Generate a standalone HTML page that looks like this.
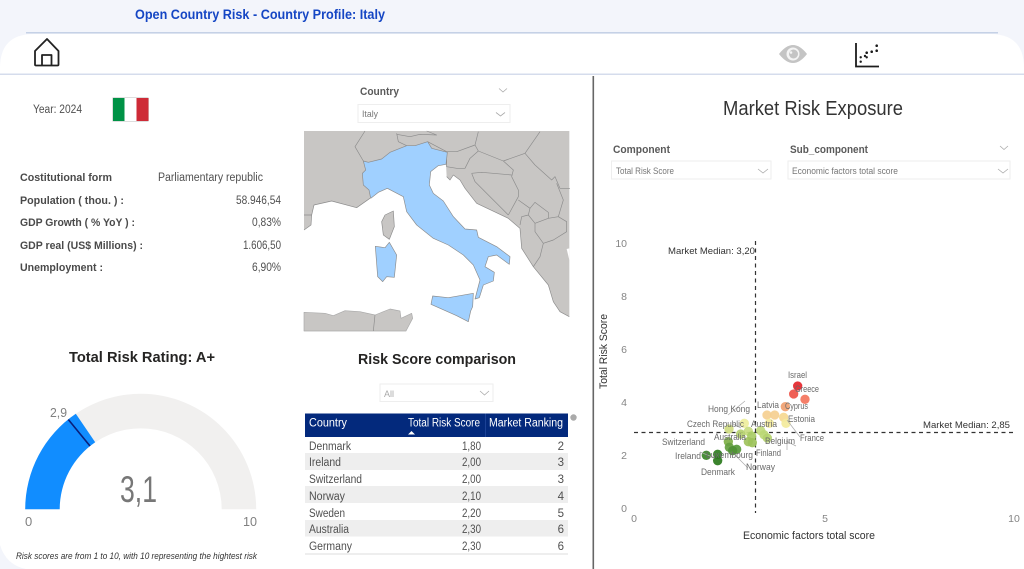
<!DOCTYPE html>
<html><head><meta charset="utf-8"><title>Open Country Risk</title>
<style>
html,body{margin:0;padding:0;background:#f3f5fb;width:1024px;height:569px;overflow:hidden}
svg{display:block;filter:blur(.3px)}
text{font-family:"Liberation Sans",sans-serif;fill:#444;font-size:11.5px}
.b{font-weight:bold;font-size:11px;fill:#4a4a4a}
.s{font-size:9.5px;fill:#6a6a6a}
.c{fill:none;stroke:#aaa;stroke-width:.8}
.box{fill:#fff;stroke:#eee;stroke-width:1}
.dd{font-size:9px;fill:#777}
.lab{font-size:11px;fill:#5a5a5a;font-weight:bold}
.t{fill:#505050}
.ax{font-size:10.5px;fill:#858585}
</style></head><body>
<svg width="1024" height="569" viewBox="0 0 1024 569" xmlns="http://www.w3.org/2000/svg">
<rect width="1024" height="569" fill="#f3f5fb"/>
<path d="M0 569V68Q0 34 34 34H990Q1024 34 1024 68V569Z" fill="#fff"/>
<path d="M0 545Q6 565 26 569H0Z" fill="#f3f5fb"/>
<rect x="26" y="32" width="972" height="1.5" fill="#c5d1e6"/>
<rect x="0" y="73.5" width="1024" height="1.5" fill="#d5dcec"/>
<rect x="592.5" y="76" width="1.6" height="493" fill="#666"/>
<text x="135" y="19" style="font-weight:bold;font-size:13.5px;fill:#1546c4" textLength="250" lengthAdjust="spacingAndGlyphs">Open Country Risk - Country Profile: Italy</text>

<!-- home icon -->
<g fill="none" stroke="#222" stroke-width="1.8" stroke-linejoin="round">
<path d="M35 51L47 39L58.500 51V64.500Q58.500 65.500 57.500 65.500H36Q35 65.500 35 64.500Z"/>
<path d="M42 65.500V55H51.500V65.500"/>
</g>
<!-- eye icon -->
<path d="M779 54Q793 36 807 54Q793 72 779 54Z" fill="#c4c4c4"/>
<circle cx="793" cy="54" r="6.500" fill="#f4f4f4"/><circle cx="793.500" cy="54" r="4.500" fill="#c4c4c4"/><circle cx="791" cy="52.500" r="1.300" fill="#f4f4f4"/>
<!-- scatter icon -->
<path d="M856 43V66.500H879" fill="none" stroke="#1c1c1c" stroke-width="1.800"/>
<g fill="#1c1c1c"><circle cx="876.700" cy="45.700" r="1.300"/><circle cx="876.700" cy="50.700" r="1.300"/><circle cx="871.700" cy="51.700" r="1.300"/><circle cx="866.700" cy="52.700" r="1.300"/><circle cx="865" cy="56" r="1.200"/><circle cx="860.700" cy="57.300" r="1.200"/><circle cx="866.700" cy="57.300" r="1.200"/><circle cx="860.700" cy="61.700" r="1.200"/></g>

<!-- left info -->
<text x="33" y="113" class="t" textLength="49" lengthAdjust="spacingAndGlyphs">Year: 2024</text>
<rect x="112" y="97" width="37" height="25" rx="2" fill="#ddd"/>
<rect x="113" y="98" width="11.500" height="23" fill="#009246"/><rect x="124.500" y="98" width="12" height="23" fill="#fff"/><rect x="136.500" y="98" width="12" height="23" fill="#ce2b37"/>
<text x="20" y="181" class="b" textLength="92" lengthAdjust="spacingAndGlyphs">Costitutional form</text>
<text x="158" y="181" class="t" textLength="105" lengthAdjust="spacingAndGlyphs">Parliamentary republic</text>
<text x="20" y="204" class="b" textLength="104" lengthAdjust="spacingAndGlyphs">Population ( thou. ) :</text>
<text x="281" y="204" text-anchor="end" class="t" textLength="45" lengthAdjust="spacingAndGlyphs">58.946,54</text>
<text x="20" y="226" class="b" textLength="115" lengthAdjust="spacingAndGlyphs">GDP Growth ( % YoY ) :</text>
<text x="281" y="226" text-anchor="end" class="t" textLength="29" lengthAdjust="spacingAndGlyphs">0,83%</text>
<text x="20" y="249" class="b" textLength="123" lengthAdjust="spacingAndGlyphs">GDP real (US$ Millions) :</text>
<text x="281" y="249" text-anchor="end" class="t" textLength="38" lengthAdjust="spacingAndGlyphs">1.606,50</text>
<text x="20" y="271" class="b" textLength="83" lengthAdjust="spacingAndGlyphs">Unemployment :</text>
<text x="281" y="271" text-anchor="end" class="t" textLength="29" lengthAdjust="spacingAndGlyphs">6,90%</text>

<!-- gauge -->
<text x="69" y="362" style="font-weight:bold;font-size:15px;fill:#252423" textLength="146" lengthAdjust="spacingAndGlyphs">Total Risk Rating: A+</text>
<path d="M25.200 509.300A115.500 115.500 0 0 1 256.200 509.300H221.700A81 81 0 0 0 59.700 509.300Z" fill="#f1f0ef"/>
<path d="M25.200 509.300A115.500 115.500 0 0 1 75.800 413.800L95.200 442.300A81 81 0 0 0 59.700 509.300Z" fill="#118dff"/>
<path d="M68.300 419.500L90 446" stroke="#0a1f7a" stroke-width="1.600"/>
<text x="50" y="417" style="font-size:13px;fill:#808080" textLength="17" lengthAdjust="spacingAndGlyphs">2,9</text>
<text x="120" y="502" style="font-size:37px;fill:#777" textLength="37" lengthAdjust="spacingAndGlyphs">3,1</text>
<text x="25" y="526" style="font-size:13px;fill:#808080">0</text>
<text x="243" y="526" style="font-size:13px;fill:#808080" textLength="14" lengthAdjust="spacingAndGlyphs">10</text>
<text x="16" y="559" style="font-size:9px;font-style:italic;fill:#333" textLength="241" lengthAdjust="spacingAndGlyphs">Risk scores are from 1 to 10, with 10 representing the hightest risk</text>

<!-- country slicer -->
<text x="360" y="95" class="lab" textLength="39" lengthAdjust="spacingAndGlyphs">Country</text>
<path class="c" d="M499 88.500L503 92L507 88.500"/>
<rect class="box" x="358" y="104.500" width="152" height="18"/>
<text x="362" y="117" class="dd" textLength="16" lengthAdjust="spacingAndGlyphs">Italy</text>
<path class="c" d="M496 112.500L500.500 116L505 112.500"/>

<!-- map -->
<g transform="translate(300 75) scale(.33333)" stroke="#8c8c8c" stroke-width="2" stroke-linejoin="round">
<path fill="#c8c6c4" stroke="none" d="M12 168H808V725L780 710L760 680L745 630L700 575L665 520L660 460L625 430L530 385L495 340L480 315L460 300L450 315L440 305L438 268L415 272L392 290L388 330L310 365L262 340L235 352L210 370L170 398L95 378L42 390L35 420L33 450L12 465Z"/>
<path fill="#c8c6c4" d="M280 408L283 455L268 493L250 480L245 440L255 420Z"/>
<path fill="#c8c6c4" d="M12 712L75 715L100 722L135 707L180 710L225 720L270 702L300 708L303 730L335 715L338 730L318 768H12Z" stroke="#aaa"/>
<path fill="none" d="M225 720L220 768M12 420H35M210 370L170 398L95 378L42 390L35 420L33 450L12 465M195 168L165 215L190 258M290 175L295 200L320 212M290 178L330 185L360 178L410 180L380 168M383 200L440 230L470 230L525 210L535 170M440 230V275L470 280L495 280L510 250L535 228L525 210M535 228L610 258L675 235L720 170M610 258L640 285L635 305L655 345L655 365L625 420M515 295L545 292L635 300M515 295L525 320L625 420M675 235L705 270L755 315L765 305L780 340L810 340M770 325L790 375L775 425M655 375L690 400L705 382L745 412L745 430L705 445M690 400L685 420L665 425L660 450M685 420L705 445L705 470L730 505L760 495L800 470L800 440L775 425L745 430M730 505L720 545L700 575M440 305L450 315L460 300L480 315L495 340L530 385L625 430L660 460L665 520L700 575L745 630L760 680L780 710L808 725"/>
<path fill="#fff" stroke="none" d="M808 520L800 522L808 555Z"/>
<path fill="#a0d0ff" d="M190 258L205 262L245 252L270 232L320 212L345 212L383 200L395 220L442 232L438 268L415 272L392 290L388 330L400 355L430 378L460 425L495 462L530 465L535 487L590 515L630 545L628 568L590 540L565 545L555 575L583 592L580 618L550 630L538 668L525 672L540 615L520 570L490 540L445 510L400 490L350 450L320 410L310 365L262 340L235 352L212 370L207 345L190 330L187 295L197 285Z"/>
<path fill="#a0d0ff" d="M226 514L255 518L268 502L290 540L283 607L260 605L248 620L233 605Z"/>
<path fill="#a0d0ff" d="M398 663L445 668L520 655L518 695L512 708L505 740L470 722L393 688Z"/>
</g>

<!-- comparison -->
<text x="358" y="364" style="font-weight:bold;font-size:15px;fill:#252423" textLength="158" lengthAdjust="spacingAndGlyphs">Risk Score comparison</text>
<rect class="box" x="380" y="384" width="113" height="17.500"/>
<text x="384" y="397" class="dd" textLength="10" lengthAdjust="spacingAndGlyphs" style="fill:#aaa">All</text>
<path class="c" d="M480 391L484.500 395L489 391"/>
<rect x="305" y="413.500" width="263" height="23.500" fill="#03297c"/>
<rect x="485" y="413.500" width="1" height="23.500" fill="#1c4296"/>
<rect x="305" y="453" width="263" height="17" fill="#eeeeee"/>
<rect x="305" y="486" width="263" height="17" fill="#eeeeee"/>
<rect x="305" y="520" width="263" height="16.500" fill="#eeeeee"/>
<rect x="305" y="553" width="263" height="2" fill="#eeeeee"/>
<circle cx="573.500" cy="417.500" r="3.200" fill="#aaa"/>
<text x="309" y="426.500" style="fill:#fff" textLength="38" lengthAdjust="spacingAndGlyphs">Country</text>
<text x="408" y="426.500" style="fill:#fff" textLength="72" lengthAdjust="spacingAndGlyphs">Total Risk Score</text>
<text x="489" y="426.500" style="fill:#fff" textLength="74" lengthAdjust="spacingAndGlyphs">Market Ranking</text>
<path d="M408 434.500L411.500 431L415 434.500Z" fill="#fff"/>
<text x="309" y="450" class="t" textLength="42" lengthAdjust="spacingAndGlyphs">Denmark</text><text x="481" y="450" text-anchor="end" class="t" textLength="19" lengthAdjust="spacingAndGlyphs">1,80</text><text x="564" y="450" text-anchor="end" class="t">2</text>
<text x="309" y="466" class="t" textLength="32" lengthAdjust="spacingAndGlyphs">Ireland</text><text x="481" y="466" text-anchor="end" class="t" textLength="19" lengthAdjust="spacingAndGlyphs">2,00</text><text x="564" y="466" text-anchor="end" class="t">3</text>
<text x="309" y="483" class="t" textLength="53" lengthAdjust="spacingAndGlyphs">Switzerland</text><text x="481" y="483" text-anchor="end" class="t" textLength="19" lengthAdjust="spacingAndGlyphs">2,00</text><text x="564" y="483" text-anchor="end" class="t">3</text>
<text x="309" y="500" class="t" textLength="36" lengthAdjust="spacingAndGlyphs">Norway</text><text x="481" y="500" text-anchor="end" class="t" textLength="19" lengthAdjust="spacingAndGlyphs">2,10</text><text x="564" y="500" text-anchor="end" class="t">4</text>
<text x="309" y="517" class="t" textLength="36" lengthAdjust="spacingAndGlyphs">Sweden</text><text x="481" y="517" text-anchor="end" class="t" textLength="19" lengthAdjust="spacingAndGlyphs">2,20</text><text x="564" y="517" text-anchor="end" class="t">5</text>
<text x="309" y="533" class="t" textLength="40" lengthAdjust="spacingAndGlyphs">Australia</text><text x="481" y="533" text-anchor="end" class="t" textLength="19" lengthAdjust="spacingAndGlyphs">2,30</text><text x="564" y="533" text-anchor="end" class="t">6</text>
<text x="309" y="550" class="t" textLength="43" lengthAdjust="spacingAndGlyphs">Germany</text><text x="481" y="550" text-anchor="end" class="t" textLength="19" lengthAdjust="spacingAndGlyphs">2,30</text><text x="564" y="550" text-anchor="end" class="t">6</text>

<!-- right panel -->
<text x="723" y="115" style="font-size:20px;fill:#333" textLength="180" lengthAdjust="spacingAndGlyphs">Market Risk Exposure</text>
<text x="613" y="153" class="lab" textLength="57" lengthAdjust="spacingAndGlyphs">Component</text>
<text x="790" y="153" class="lab" textLength="78" lengthAdjust="spacingAndGlyphs">Sub_component</text>
<path class="c" d="M1000 146L1004 149.500L1008 146"/>
<rect class="box" x="611.500" y="161" width="159.500" height="18"/>
<rect class="box" x="788" y="161" width="222" height="18"/>
<text x="616" y="174" class="dd" textLength="58" lengthAdjust="spacingAndGlyphs">Total Risk Score</text>
<text x="792" y="174" class="dd" textLength="106" lengthAdjust="spacingAndGlyphs">Economic factors total score</text>
<path class="c" d="M758 169L763 173L768 169"/><path class="c" d="M998 169L1003 173L1008 169"/>

<!-- scatter -->
<text x="627" y="247" text-anchor="end" class="ax">10</text><text x="627" y="300" text-anchor="end" class="ax">8</text><text x="627" y="353" text-anchor="end" class="ax">6</text><text x="627" y="406" text-anchor="end" class="ax">4</text><text x="627" y="459" text-anchor="end" class="ax">2</text><text x="627" y="512" text-anchor="end" class="ax">0</text>
<text x="634" y="522" text-anchor="middle" class="ax">0</text><text x="825" y="522" text-anchor="middle" class="ax">5</text><text x="1014" y="522" text-anchor="middle" class="ax">10</text>
<text transform="translate(607 389) rotate(-90)" style="font-size:11px;fill:#333" textLength="75" lengthAdjust="spacingAndGlyphs">Total Risk Score</text>
<text x="743" y="539" style="font-size:11px;fill:#333" textLength="132" lengthAdjust="spacingAndGlyphs">Economic factors total score</text>
<path d="M755.500 241V513" stroke="#333" stroke-width="1.200" stroke-dasharray="4 3.500"/>
<path d="M634 432.500H1015" stroke="#333" stroke-width="1.200" stroke-dasharray="4 3.500"/>
<text x="668" y="254" style="font-size:9.500px;fill:#333" textLength="87" lengthAdjust="spacingAndGlyphs">Market Median: 3,20</text>
<text x="923" y="428" style="font-size:9.500px;fill:#333" textLength="87" lengthAdjust="spacingAndGlyphs">Market Median: 2,85</text>

<g transform="translate(640 360) scale(.33333)" fill-opacity=".92">
<circle cx="473" cy="78" r="14" fill="#e5242a"/><circle cx="461" cy="102" r="14" fill="#ee5248"/><circle cx="495" cy="118" r="14" fill="#f4745c"/>
<circle cx="436" cy="140" r="14" fill="#f0a070"/><circle cx="381" cy="165" r="14" fill="#f5cf90"/><circle cx="404" cy="165" r="14" fill="#f5cf90"/><circle cx="431" cy="172" r="14" fill="#f6d890"/><circle cx="438" cy="190" r="14" fill="#f3ea9c"/><circle cx="388" cy="190" r="14" fill="#f3ea9c"/>
<circle cx="313" cy="190" r="14" fill="#eeee9c"/><circle cx="267" cy="207" r="14" fill="#cfdc80"/><circle cx="325" cy="214" r="14" fill="#c8dc80"/><circle cx="302" cy="222" r="14" fill="#b5d070"/><circle cx="362" cy="212" r="14" fill="#c0da7c"/><circle cx="372" cy="224" r="14" fill="#bcd876"/><circle cx="335" cy="228" r="14" fill="#a8cc65"/><circle cx="325" cy="245" r="14" fill="#9fc25c"/><circle cx="337" cy="248" r="14" fill="#9cc25a"/><circle cx="382" cy="234" r="14" fill="#b4d26e"/>
<circle cx="265" cy="245" r="14" fill="#7fb048"/><circle cx="268" cy="262" r="14" fill="#65a040"/><circle cx="290" cy="268" r="14" fill="#56983a"/><circle cx="278" cy="272" r="14" fill="#4f9035"/>
<circle cx="233" cy="283" r="14" fill="#2e7d20"/><circle cx="199" cy="286" r="14" fill="#3a8528"/><circle cx="233" cy="302" r="14" fill="#2a7a1c"/>
</g>
<path d="M700 452L715 458M733 424L741 428M786 441L796 446M787 437V450M736 456L748 468M787 420L800 437M745 401L728 415" stroke="#aaa" stroke-width=".7" fill="none"/>
<text x="788" y="378" class="s" textLength="19" lengthAdjust="spacingAndGlyphs">Israel</text>
<text x="795" y="392" class="s" textLength="24" lengthAdjust="spacingAndGlyphs">Greece</text>
<text x="757" y="408" class="s" textLength="22" lengthAdjust="spacingAndGlyphs">Latvia</text>
<text x="785" y="409" class="s" textLength="23" lengthAdjust="spacingAndGlyphs">Cyprus</text>
<text x="708" y="412" class="s" textLength="42" lengthAdjust="spacingAndGlyphs">Hong Kong</text>
<text x="788" y="422" class="s" textLength="27" lengthAdjust="spacingAndGlyphs">Estonia</text>
<text x="687" y="427" class="s" textLength="57" lengthAdjust="spacingAndGlyphs">Czech Republic</text>
<text x="751" y="427" class="s" textLength="26" lengthAdjust="spacingAndGlyphs">Austria</text>
<text x="800" y="441" class="s" textLength="24" lengthAdjust="spacingAndGlyphs">France</text>
<text x="714" y="440" class="s" textLength="32" lengthAdjust="spacingAndGlyphs">Australia</text>
<text x="765" y="444" class="s" textLength="30" lengthAdjust="spacingAndGlyphs">Belgium</text>
<text x="662" y="445" class="s" textLength="43" lengthAdjust="spacingAndGlyphs">Switzerland</text>
<text x="756" y="456" class="s" textLength="25" lengthAdjust="spacingAndGlyphs">Finland</text>
<text x="675" y="459" class="s" textLength="26" lengthAdjust="spacingAndGlyphs">Ireland</text>
<text x="706" y="458" class="s" textLength="47" lengthAdjust="spacingAndGlyphs">Luxembourg</text>
<text x="746" y="470" class="s" textLength="29" lengthAdjust="spacingAndGlyphs">Norway</text>
<text x="701" y="475" class="s" textLength="34" lengthAdjust="spacingAndGlyphs">Denmark</text>
</svg>
</body></html>
